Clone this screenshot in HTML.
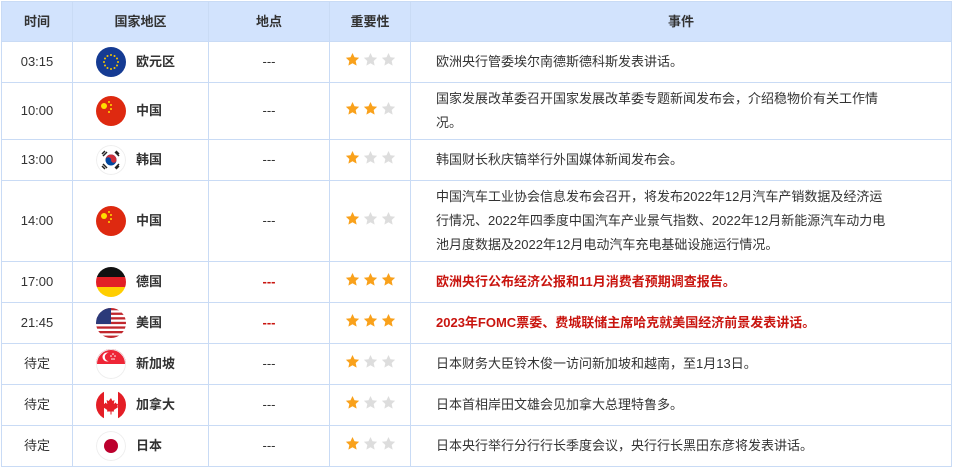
<!DOCTYPE html>
<html><head><meta charset="utf-8"><style>
body{margin:0;background:#fff;font-family:"Liberation Sans","Noto Sans CJK SC",sans-serif;color:#333;}
table{position:absolute;left:1px;top:1px;border-collapse:collapse;table-layout:fixed;width:951px;}
td,th{border:1px solid #c9dbf5;font-size:13px;padding:0;text-align:center;line-height:16px;}
th{background:#d2e3fd;height:39px;font-weight:bold;color:#333;font-size:13px;}
td.e{text-align:left;padding-left:25px;line-height:24px;padding-right:52px;}
td.e.n{padding-right:10px;white-space:nowrap;}
.r td.e,.r td.d{color:#c9150f;font-weight:bold;}
.c{display:flex;align-items:center;padding-left:23px;font-weight:bold;height:30px;line-height:30px;}
.c span{display:block;line-height:30px;}
.f{width:30px;height:30px;border-radius:50%;overflow:hidden;margin-right:10px;flex:none;display:block;}
.s{display:inline-block;width:15px;height:15px;margin:0 1.5px;vertical-align:middle;position:relative;top:-3px;}
</style></head><body>
<svg width="0" height="0" style="position:absolute"><defs>
<symbol id="st" viewBox="0 0 24 24"><path d="M12 1.5l3.2 6.9 7.4.8-5.5 5.1 1.5 7.4L12 18l-6.6 3.7 1.5-7.4L1.4 9.2l7.4-.8z"/></symbol></defs></svg>
<table>
<colgroup><col style="width:71px"><col style="width:136px"><col style="width:121px"><col style="width:81px"><col></colgroup>
<tr><th>时间</th><th>国家地区</th><th>地点</th><th>重要性</th><th>事件</th></tr>
<tr style="height:41px"><td>03:15</td><td><div class="c"><svg class="f" viewBox="0 0 30 30"><rect width="30" height="30" fill="#153b93"/><g fill="#f5c400"><circle cx="15" cy="8" r="1"/><circle cx="15" cy="22" r="1"/><circle cx="8" cy="15" r="1"/><circle cx="22" cy="15" r="1"/><circle cx="11.5" cy="9" r="1"/><circle cx="18.5" cy="9" r="1"/><circle cx="11.5" cy="21" r="1"/><circle cx="18.5" cy="21" r="1"/><circle cx="9" cy="11.5" r="1"/><circle cx="21" cy="11.5" r="1"/><circle cx="9" cy="18.5" r="1"/><circle cx="21" cy="18.5" r="1"/></g></svg><span>欧元区</span></div></td><td>---</td><td><svg class="s" fill="#f9a11b"><use href="#st"/></svg><svg class="s" fill="#ddd"><use href="#st"/></svg><svg class="s" fill="#ddd"><use href="#st"/></svg></td><td class="e">欧洲央行管委埃尔南德斯德科斯发表讲话。</td></tr>
<tr style="height:57px"><td>10:00</td><td><div class="c"><svg class="f" viewBox="0 0 30 30"><rect width="30" height="30" fill="#de2910"/><circle cx="8" cy="10" r="3" fill="#ffde00"/><g fill="#ffde00"><circle cx="13" cy="6" r="1"/><circle cx="15" cy="9" r="1"/><circle cx="15" cy="13" r="1"/><circle cx="13" cy="16" r="1"/></g></svg><span>中国</span></div></td><td>---</td><td><svg class="s" fill="#f9a11b"><use href="#st"/></svg><svg class="s" fill="#f9a11b"><use href="#st"/></svg><svg class="s" fill="#ddd"><use href="#st"/></svg></td><td class="e">国家发展改革委召开国家发展改革委专题新闻发布会，介绍稳物价有关工作情况。</td></tr>
<tr style="height:41px"><td>13:00</td><td><div class="c"><svg class="f" viewBox="0 0 30 30"><rect width="30" height="30" fill="#fff"/><circle cx="15" cy="15" r="5.5" fill="#0047a0"/><path d="M9.5 15a5.5 5.5 0 0 1 11 0a2.75 2.75 0 0 1-5.5 0a2.75 2.75 0 0 0-5.5 0z" fill="#cd2e3a"/><g stroke="#222" stroke-width="1.5"><path d="M6 9l3-3M7 11l4-4M19 7l4 4M20 6l3 3M6 21l3 3M7 19l4 4M19 23l4-4M20 24l3-3"/></g><circle cx="15" cy="15" r="14.5" fill="none" stroke="#eee"/></svg><span>韩国</span></div></td><td>---</td><td><svg class="s" fill="#f9a11b"><use href="#st"/></svg><svg class="s" fill="#ddd"><use href="#st"/></svg><svg class="s" fill="#ddd"><use href="#st"/></svg></td><td class="e">韩国财长秋庆镐举行外国媒体新闻发布会。</td></tr>
<tr style="height:81px"><td>14:00</td><td><div class="c"><svg class="f" viewBox="0 0 30 30"><rect width="30" height="30" fill="#de2910"/><circle cx="8" cy="10" r="3" fill="#ffde00"/><g fill="#ffde00"><circle cx="13" cy="6" r="1"/><circle cx="15" cy="9" r="1"/><circle cx="15" cy="13" r="1"/><circle cx="13" cy="16" r="1"/></g></svg><span>中国</span></div></td><td>---</td><td><svg class="s" fill="#f9a11b"><use href="#st"/></svg><svg class="s" fill="#ddd"><use href="#st"/></svg><svg class="s" fill="#ddd"><use href="#st"/></svg></td><td class="e n">中国汽车工业协会信息发布会召开，将发布2022年12月汽车产销数据及经济运<br>行情况、2022年四季度中国汽车产业景气指数、2022年12月新能源汽车动力电<br>池月度数据及2022年12月电动汽车充电基础设施运行情况。</td></tr>
<tr class="r" style="height:41px"><td>17:00</td><td><div class="c"><svg class="f" viewBox="0 0 30 30"><rect width="30" height="10" fill="#111"/><rect y="10" width="30" height="10" fill="#e21f26"/><rect y="20" width="30" height="10" fill="#ffce00"/></svg><span>德国</span></div></td><td class="d">---</td><td><svg class="s" fill="#f9a11b"><use href="#st"/></svg><svg class="s" fill="#f9a11b"><use href="#st"/></svg><svg class="s" fill="#f9a11b"><use href="#st"/></svg></td><td class="e">欧洲央行公布经济公报和11月消费者预期调查报告。</td></tr>
<tr class="r" style="height:41px"><td>21:45</td><td><div class="c"><svg class="f" viewBox="0 0 30 30"><rect width="30" height="30" fill="#fff"/><g fill="#c1272d"><rect y="0" width="30" height="2.3"/><rect y="4.6" width="30" height="2.3"/><rect y="9.2" width="30" height="2.3"/><rect y="13.8" width="30" height="2.3"/><rect y="18.4" width="30" height="2.3"/><rect y="23" width="30" height="2.3"/><rect y="27.6" width="30" height="2.4"/></g><rect width="15" height="16" fill="#2b3a7a"/></svg><span>美国</span></div></td><td class="d">---</td><td><svg class="s" fill="#f9a11b"><use href="#st"/></svg><svg class="s" fill="#f9a11b"><use href="#st"/></svg><svg class="s" fill="#f9a11b"><use href="#st"/></svg></td><td class="e">2023年FOMC票委、费城联储主席哈克就美国经济前景发表讲话。</td></tr>
<tr style="height:41px"><td>待定</td><td><div class="c"><svg class="f" viewBox="0 0 30 30"><rect width="30" height="30" fill="#fff"/><rect width="30" height="15" fill="#ee2536"/><circle cx="11" cy="8" r="4.5" fill="#fff"/><circle cx="13" cy="8" r="4.2" fill="#ee2536"/><g fill="#fff"><circle cx="17" cy="5" r=".8"/><circle cx="15" cy="7" r=".8"/><circle cx="19" cy="7" r=".8"/><circle cx="16" cy="10" r=".8"/><circle cx="18" cy="10" r=".8"/></g><circle cx="15" cy="15" r="14.5" fill="none" stroke="#eee"/></svg><span>新加坡</span></div></td><td>---</td><td><svg class="s" fill="#f9a11b"><use href="#st"/></svg><svg class="s" fill="#ddd"><use href="#st"/></svg><svg class="s" fill="#ddd"><use href="#st"/></svg></td><td class="e">日本财务大臣铃木俊一访问新加坡和越南，至1月13日。</td></tr>
<tr style="height:41px"><td>待定</td><td><div class="c"><svg class="f" viewBox="0 0 30 30"><rect width="30" height="30" fill="#fff"/><rect width="8" height="30" fill="#e41e26"/><rect x="22" width="8" height="30" fill="#e41e26"/><path d="M15 8l1.5 3 2-1-.7 4 2-1.5.8 1.5 1.5-.3-.8 2.5 1 .8-4.5 3 .3 1.5H15.5v3h-1v-3h-3.5l.3-1.5-4.5-3 1-.8-.8-2.5 1.5.3.8-1.5 2 1.5-.7-4 2 1z" fill="#e41e26"/></svg><span>加拿大</span></div></td><td>---</td><td><svg class="s" fill="#f9a11b"><use href="#st"/></svg><svg class="s" fill="#ddd"><use href="#st"/></svg><svg class="s" fill="#ddd"><use href="#st"/></svg></td><td class="e">日本首相岸田文雄会见加拿大总理特鲁多。</td></tr>
<tr style="height:41px"><td>待定</td><td><div class="c"><svg class="f" viewBox="0 0 30 30"><rect width="30" height="30" fill="#fff"/><circle cx="15" cy="15" r="7" fill="#bc002d"/><circle cx="15" cy="15" r="14.5" fill="none" stroke="#eee"/></svg><span>日本</span></div></td><td>---</td><td><svg class="s" fill="#f9a11b"><use href="#st"/></svg><svg class="s" fill="#ddd"><use href="#st"/></svg><svg class="s" fill="#ddd"><use href="#st"/></svg></td><td class="e">日本央行举行分行行长季度会议，央行行长黑田东彦将发表讲话。</td></tr>
</table>
</body></html>
